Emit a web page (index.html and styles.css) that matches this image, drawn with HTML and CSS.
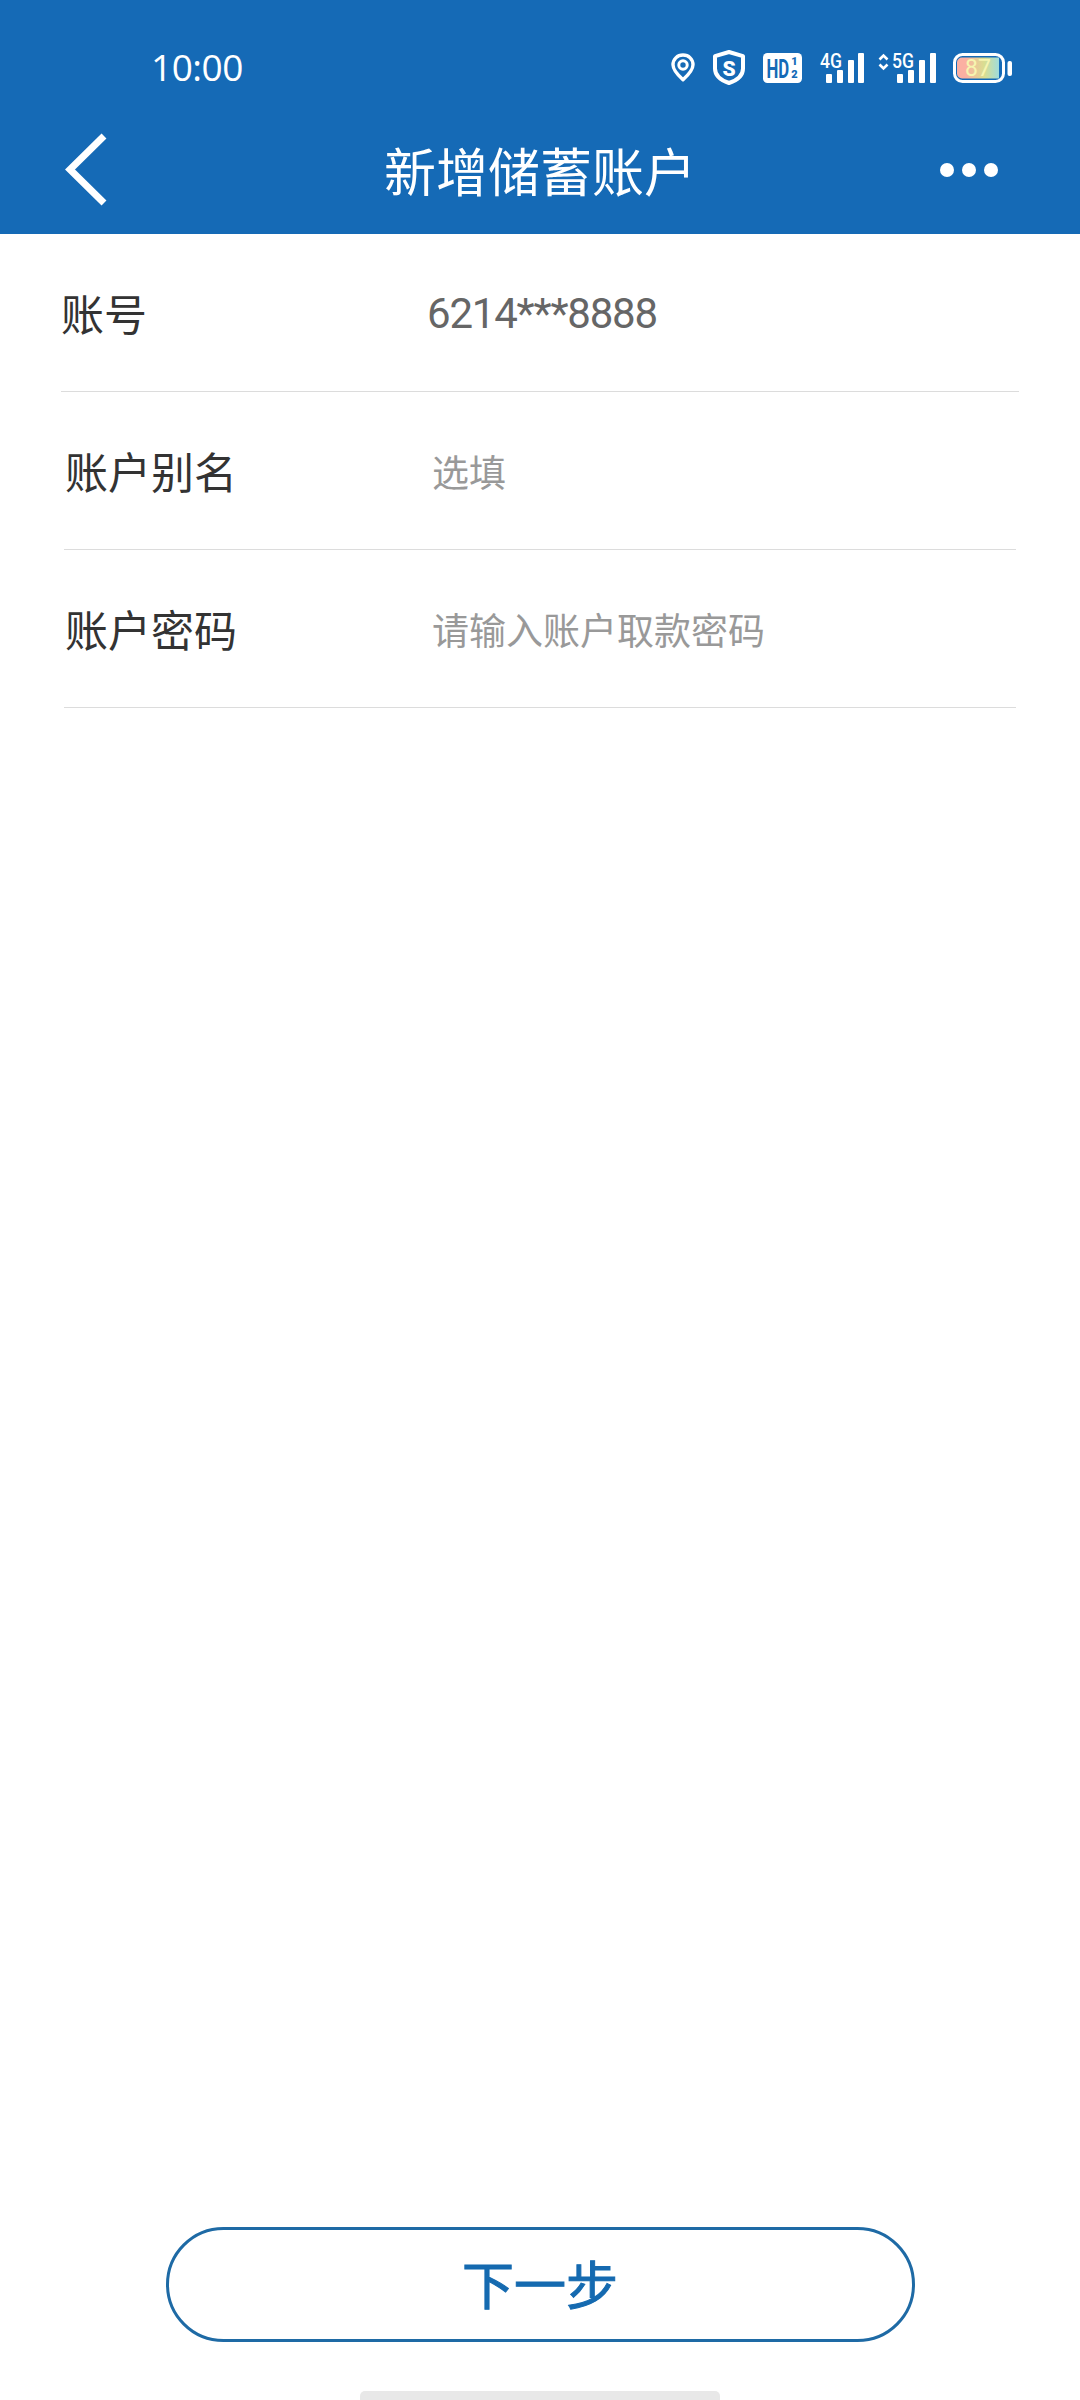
FILE: index.html
```html
<!DOCTYPE html>
<html lang="zh-CN">

<head>
    <meta charset="UTF-8">
    <meta name="viewport" content="width=device-width, initial-scale=1.0">
    <title>新增储蓄账户</title>
    <link rel="stylesheet" href="styles.css">
</head>

<body>

    <!-- Header -->
    <div class="app-header">
        <div class="status-bar">
            <span class="status-time">10:00</span>
            <div class="status-icons">
                <svg class="ic-wide" width="24" height="29" viewBox="0 0 24 29">
                    <path d="M12 2C6.200 2 2 6.300 2 11.800c0 4.700 4.300 9.800 10 15 5.700-5.200 10-10.300 10-15C22 6.300 17.800 2 12 2z" fill="none" stroke="#fff" stroke-width="3.400" stroke-linejoin="round"/>
                    <circle cx="12" cy="12" r="4.200" fill="none" stroke="#fff" stroke-width="3"/>
                </svg>
                <svg class="ic-wide" width="32" height="35" viewBox="0 0 32 35">
                    <path d="M16 2 30 6.200v12.300c0 7-5.800 11.800-14 14.500C7.800 30.300 2 25.500 2 18.500V6.200z" fill="none" stroke="#fff" stroke-width="4" stroke-linejoin="round"/>
                    <text class="svg-txt" x="16" y="25.500" font-size="21" font-weight="900" text-anchor="middle" fill="#fff">S</text>
                </svg>
                <svg class="ic-wide" width="39" height="30" viewBox="0 0 39 30">
                    <rect width="39" height="30" rx="4.500" fill="#fff"/>
                    <text class="svg-txt" transform="translate(3.500 25) scale(.67 1)" font-size="25" font-weight="700" fill="#156ab6">HD</text>
                    <text class="svg-txt" x="31.500" y="12" font-size="11" font-weight="900" fill="#156ab6" text-anchor="middle">1</text>
                    <text class="svg-txt" x="31.500" y="25" font-size="11" font-weight="900" fill="#156ab6" text-anchor="middle">2</text>
                </svg>
                <svg width="44" height="30" viewBox="0 0 44 30">
                    <text class="svg-txt" x="0" y="15" font-size="21" font-weight="500" fill="#fff" textLength="22" lengthAdjust="spacingAndGlyphs">4G</text>
                    <rect x="6" y="21" width="6" height="9" rx="1" fill="#fff"/>
                    <rect x="17" y="17" width="6" height="13" rx="1" fill="#fff"/>
                    <rect x="28" y="7" width="6" height="23" rx="1" fill="#fff"/>
                    <rect x="38" y="0" width="6" height="30" rx="1" fill="#fff"/>
                </svg>
                <svg class="ic-5g" width="58" height="30" viewBox="0 0 58 30">
                    <path d="M1.500 6.500 5.500 2.500l4 4M1.500 11.500l4 4 4-4" fill="none" stroke="#fff" stroke-width="2.600"/>
                    <text class="svg-txt" x="14" y="15" font-size="21" font-weight="500" fill="#fff" textLength="22" lengthAdjust="spacingAndGlyphs">5G</text>
                    <rect x="19" y="21" width="6" height="9" rx="1" fill="#fff"/>
                    <rect x="30" y="17" width="6" height="13" rx="1" fill="#fff"/>
                    <rect x="41" y="7" width="6" height="23" rx="1" fill="#fff"/>
                    <rect x="52" y="0" width="6" height="30" rx="1" fill="#fff"/>
                </svg>
                <svg width="59" height="30" viewBox="0 0 59 30">
                    <defs>
                        <linearGradient id="batFill">
                            <stop offset="0.2" stop-color="#fbb0a2"/>
                            <stop offset="0.65" stop-color="#d9de90"/>
                            <stop offset="1" stop-color="#9fdcdc"/>
                        </linearGradient>
                    </defs>
                    <rect x="1.500" y="1.500" width="49" height="27" rx="8" fill="none" stroke="#fff" stroke-width="3"/>
                    <path d="M9 4.500h37v21H9a5 5 0 0 1-5-5v-11a5 5 0 0 1 5-5z" fill="url(#batFill)"/>
                    <text class="svg-txt" x="25" y="23" font-size="23" fill="#f6f5b0" text-anchor="middle">87</text>
                    <rect x="54.500" y="8" width="4.500" height="15" rx="2" fill="#fff"/>
                </svg>
            </div>
        </div>

        <div class="nav-bar">
            <div class="nav-side nav-left">
                <svg width="45" height="75" viewBox="0 0 45 75">
                    <path d="M39 4 5 37.500 39 71" fill="none" stroke="#fff" stroke-width="7"/>
                </svg>
            </div>
            <div class="nav-title">新增储蓄账户</div>
            <div class="nav-side nav-right">
                <span class="dot"></span><span class="dot"></span><span class="dot"></span>
            </div>
        </div>
    </div>

    <!-- Form -->
    <div class="form-body">
        <div class="form-row first">
            <div class="row-label">账号</div>
            <div class="row-value">6214***8888</div>
        </div>
        <div class="form-row">
            <div class="row-label">账户别名</div>
            <div class="row-hint">选填</div>
        </div>
        <div class="form-row">
            <div class="row-label">账户密码</div>
            <div class="row-hint">请输入账户取款密码</div>
        </div>
    </div>

    <!-- Bottom -->
    <div class="form-footer">
        <button class="btn-next">下一步</button>
        <div class="home-bar"></div>
    </div>

</body>

</html>
```

FILE: styles.css
```css
* {
    box-sizing: border-box;
}

body {
    margin: 0;
    font-family: Roboto, "Noto Sans CJK SC", sans-serif;
    background-color: #fff;
    display: flex;
    flex-direction: column;
    height: 2400px;
    overflow: hidden;
}

.svg-txt {
    font-family: Roboto, sans-serif;
}

.app-header {
    background-color: #156ab6;
    color: #fff;
    height: 234px;
    flex-shrink: 0;
}

.status-bar {
    display: flex;
    align-items: center;
    justify-content: space-between;
    height: 87px;
    padding: 46px 68px 0 151px;
}

.status-time {
    font-size: 37px;
    letter-spacing: -0.5px;
    font-family: "Open Sans", sans-serif;
}

.status-icons {
    display: flex;
    align-items: center;
    gap: 14px;
    padding-top: 2px;
}

.status-icons svg {
    overflow: visible;
}

.status-icons .ic-wide {
    margin-right: 4px;
}

.status-icons .ic-5g {
    margin-right: 3px;
}

.nav-bar {
    display: flex;
    align-items: center;
    height: 147px;
    padding-top: 18px;
}

.nav-side {
    width: 200px;
    display: flex;
    align-items: center;
}

.nav-left {
    padding-left: 65px;
}

.nav-right {
    justify-content: flex-end;
    padding-right: 82px;
    gap: 8px;
}

.dot {
    width: 14px;
    height: 14px;
    border-radius: 50%;
    background-color: #fff;
}

.nav-title {
    flex: 1;
    text-align: center;
    font-size: 52px;
}

.form-body {
    flex: 1;
}

.form-row {
    display: flex;
    align-items: center;
    height: 158px;
    margin: 0 64px;
    border-bottom: 1px solid #dcdcdc;
}

.form-row.first {
    margin: 0 61px;
}

.row-label {
    width: 368px;
    padding: 0 0 2px 1px;
    font-size: 43px;
    color: #333;
}

.first .row-label {
    width: 366px;
    padding-left: 0;
}

.row-value {
    padding-top: 2px;
    font-size: 42px;
    letter-spacing: -1.2px;
    color: #666;
}

.row-hint {
    font-size: 37px;
    color: #999;
}

.form-footer {
    display: flex;
    flex-direction: column;
    align-items: center;
    gap: 49px;
}

.btn-next {
    width: 749px;
    height: 115px;
    padding-bottom: 5px;
    border: 3px solid #1e6aa5;
    border-radius: 58px;
    background-color: #fff;
    color: #156ab0;
    font-family: inherit;
    font-size: 52px;
    font-weight: 400;
    -webkit-text-stroke: 1px #156ab0;
}

.home-bar {
    width: 360px;
    height: 9px;
    background-color: #e8e8e8;
    border-radius: 5px 5px 0 0;
}
```
